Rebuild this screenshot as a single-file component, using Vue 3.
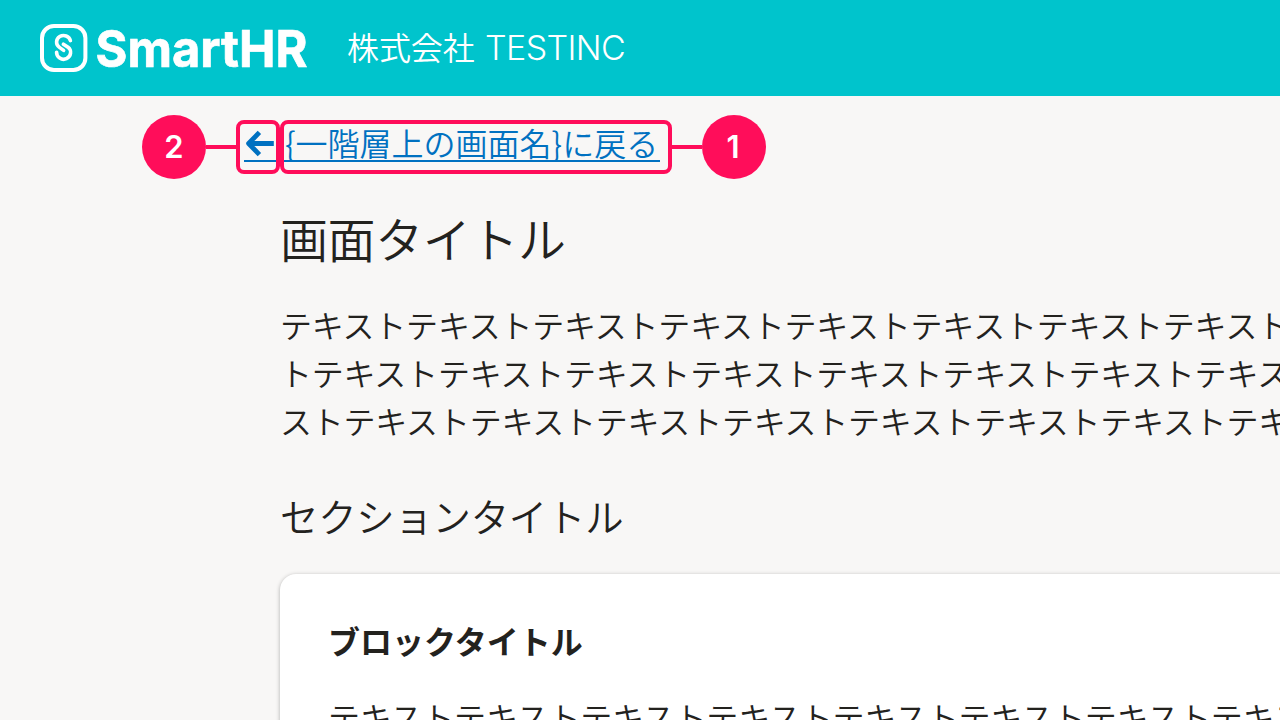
<script setup>
const lines = [
  'テキスト'.repeat(8),
  'ト' + 'テキスト'.repeat(8),
  'スト' + 'テキスト'.repeat(8),
]
const blockLine = 'テキスト'.repeat(8)
</script>

<template>
  <div class="screen">
    <header class="header">
      <svg class="logo" width="268" height="48" viewBox="0 0 268 48">
        <rect x="2" y="2" width="43.4" height="44" rx="12" fill="none" stroke="#fff" stroke-width="4" />
        <g fill="none" stroke="#fff" stroke-width="3.6" stroke-linecap="round">
          <path d="M30.4 16.6A7 6.6 0 1 0 19.4 23.4L23.6 26.4" />
          <path d="M23.4 20.2L28 23.2A7 6.8 0 1 1 16.6 28.2" />
        </g>
        <text class="mark" x="55.5" y="43.3" textLength="212" lengthAdjust="spacingAndGlyphs">SmartHR</text>
      </svg>
      <div class="company"><span class="name">株式会社</span><span class="latin">TESTINC</span></div>
    </header>

    <nav class="back">
      <a class="link">
        <svg class="arrow" width="32" height="32" viewBox="0 0 32 32">
          <path d="M15.4 4.4L4.6 15.5L15.4 26.6M5 15.5H29.8" fill="none" stroke="#0071c1" stroke-width="4.8" stroke-linejoin="round" />
        </svg>
        <span class="label">{一階層上の画面名}に戻る</span>
      </a>
      <div class="note n2"><b class="dot">2</b><i class="wire"></i><i class="box"></i></div>
      <div class="note n1"><i class="box"></i><i class="wire"></i><b class="dot">1</b></div>
    </nav>

    <main class="main">
      <h1>画面タイトル</h1>
      <div class="text"><p v-for="l in lines" :key="l">{{ l }}</p></div>
      <h2>セクションタイトル</h2>
      <section class="card">
        <h3>ブロックタイトル</h3>
        <div class="text"><p>{{ blockLine }}</p></div>
      </section>
    </main>
  </div>
</template>

<style>
body { margin: 0; overflow: hidden; }
</style>

<style scoped>
.screen {
  width: 1280px; height: 720px; overflow: hidden;
  background: #f8f7f6; color: #23221e;
  font-family: "Noto Sans CJK JP", sans-serif; font-weight: 350;
}
.header { height: 96px; background: #00c4cc; display: flex; align-items: center; padding-left: 40px; color: #fff; }
.logo { display: block; overflow: visible; }
.mark { font: 700 51.5px Inter, sans-serif; fill: #fff; stroke: #fff; stroke-width: 0.7px; }
.company { margin-left: 39px; display: flex; align-items: baseline; font-size: 32px; line-height: 48px; white-space: nowrap; margin-top: -2px; }
.name { letter-spacing: -0.1px; }
.latin { font-family: Inter, sans-serif; font-size: 34px; font-weight: 300; margin-left: 10.4px; letter-spacing: -0.6px; }
.back { position: relative; height: 84px; }
.link {
  display: flex; align-items: flex-end; margin-left: 244px; width: 416px; height: 66px;
  box-sizing: border-box; border-bottom: 2px solid #0071c1; color: #0071c1;
}
.arrow { flex: none; margin: 0 9px 0 0; }
.label { font-size: 32px; line-height: 48px; white-space: nowrap; margin-bottom: -6px; }
.note { position: absolute; top: 19px; height: 64px; display: flex; align-items: center; }
.n2 { left: 142px; }
.n1 { left: 280px; }
.dot { width: 64px; height: 64px; border-radius: 50%; background: #ff0d5a; color: #fff; font: 600 31px/63px Inter, sans-serif; text-align: center; }
.n1 .dot { text-indent: -2px; }
.wire { width: 30px; height: 4px; background: #ff0d5a; }
.box { box-sizing: border-box; height: 54px; border: 4px solid #ff0d5a; border-radius: 8px; }
.n2 .box { width: 44px; }
.n1 .box { width: 392px; }
.main { padding-left: 280px; }
h1, h2, h3, p { margin: 0; white-space: nowrap; }
h1 { font-size: 48px; line-height: 60px; font-weight: 350; padding-top: 27px; letter-spacing: -0.4px; }
.text { font-size: 32px; line-height: 48px; letter-spacing: -0.23px; padding-top: 33px; }
h2 { font-size: 38.4px; line-height: 48px; font-weight: 350; padding-top: 47px; letter-spacing: -0.25px; }
.card { margin-top: 35px; width: 1100px; height: 300px; box-sizing: border-box; padding: 42px 48px; background: #fff; border-radius: 16px; box-shadow: 0 1px 4px rgba(3, 3, 2, 0.3); }
.card .text { padding-top: 28px; }
h3 { font-size: 32px; line-height: 48px; font-weight: 700; }
</style>
